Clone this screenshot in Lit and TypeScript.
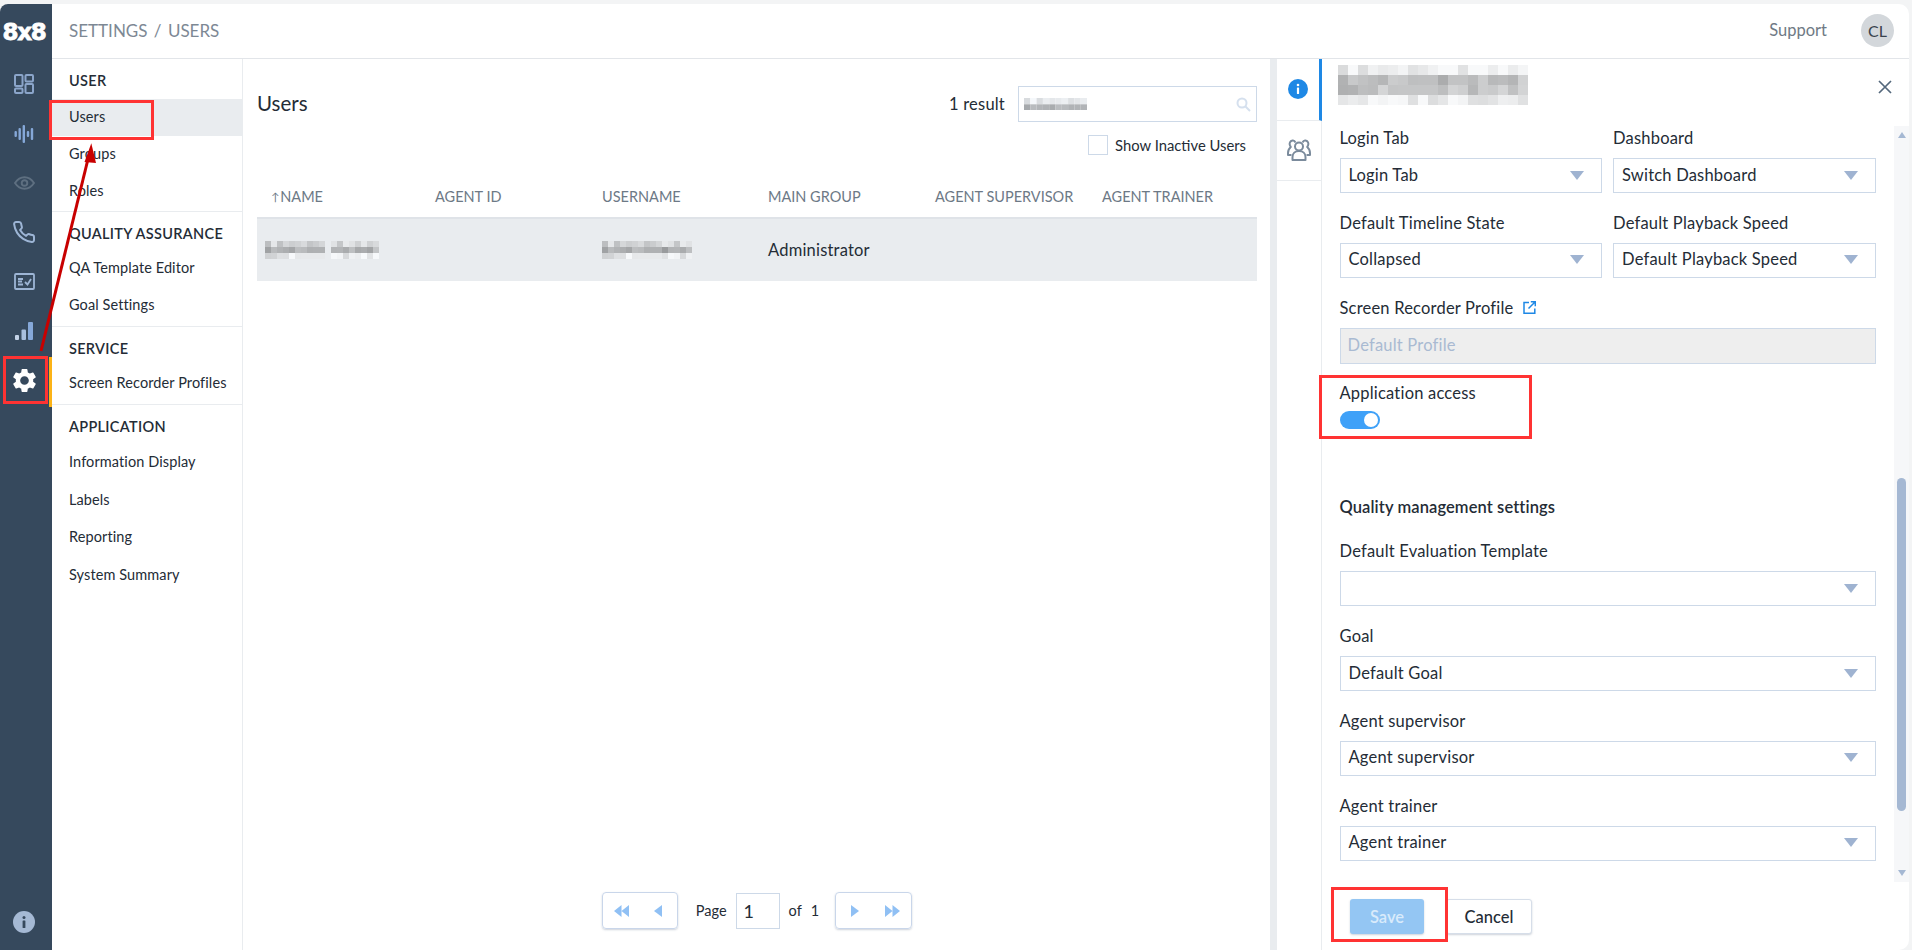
import { LitElement, html, css, svg } from "lit";
import { customElement } from "lit/decorators.js";

const mosaic = (cols: number, cell: number, tones: number[], gaps: number[] = [], tint = 0, amp = 22) => {
  const rects = [];
  for (let r = 0; r < tones.length; r++) {
    for (let c = 0; c < cols; c++) {
      if (gaps.includes(c)) continue;
      const noise = Math.sin(c * 12.9898 + r * 78.233) * 43758.5453;
      const v = tones[r] + (noise - Math.floor(noise) - 0.5) * 2 * amp;
      const shade = Math.round(Math.min(248, v));
      rects.push(svg`<rect x=${c * cell} y=${r * cell} width=${cell} height=${cell} fill="rgb(${shade},${shade + tint},${shade + tint * 2})"/>`);
    }
  }
  return html`<svg class="mosaic" width=${cols * cell} height=${tones.length * cell}>${rects}</svg>`;
};

const arrowDown = html`<span class="caret"></span>`;

const select = (label: string, value: string) => html`
  <div class="field">
    <div class="label">${label}</div>
    <div class="select"><span>${value}</span>${arrowDown}</div>
  </div>
`;

const navGroup = (title: string, items: string[], cls = "") => html`
  <div class="nav-group ${cls}">
    <div class="nav-head">${title}</div>
    ${items.map((i) => html`<div class="nav-item ${i === "Users" ? "active" : ""}">${i}</div>`)}
  </div>
`;

@customElement("app-root")
export class AppRoot extends LitElement {
  static styles = css`
    :host {
      display: block;
      position: relative;
      width: 1912px;
      height: 950px;
      overflow: hidden;
      background: #f3f4f5;
      font-family: "Lato", "Noto Sans", sans-serif;
      font-size: 15px;
      color: #242c36;
    }
    .shell {
      display: flex;
      height: 946px;
      margin: 4px 3px 0 0;
      background: #fff;
      border-radius: 8px 10px 10px 0;
      overflow: hidden;
    }

    /* icon rail */
    .rail {
      width: 52px;
      flex: none;
      box-sizing: border-box;
      padding-right: 4px;
      display: flex;
      flex-direction: column;
      background: #36495d;
    }
    .logo {
      height: 55px;
      display: flex;
      align-items: center;
      justify-content: center;
      color: #fff;
      font-family: "DejaVu Sans", sans-serif;
      font-weight: 700;
      font-size: 23px;
      letter-spacing: -1.2px;
      -webkit-text-stroke: 0.8px #fff;
    }
    .slot {
      position: relative;
      height: 49.5px;
      flex: none;
      display: flex;
      align-items: center;
      justify-content: center;
    }
    .slot.active::after {
      content: "";
      position: absolute;
      right: -4px;
      top: 1px;
      bottom: -1px;
      width: 3px;
      background: #fcb316;
    }
    .wave-icon {
      margin-top: 2px;
    }
    .rail-info {
      margin-top: auto;
      margin-bottom: 6px;
      height: 44px;
    }

    /* right of the rail */
    .content {
      flex: 1;
      min-width: 0;
      display: flex;
      flex-direction: column;
    }
    .topbar {
      height: 55px;
      flex: none;
      box-sizing: border-box;
      display: flex;
      align-items: center;
      padding: 0 15px 2px 17px;
      border-bottom: 1px solid #e2e5e9;
    }
    .crumb {
      font-size: 17px;
      color: #7d8894;
      word-spacing: 2px;
    }
    .support {
      margin-left: auto;
      font-size: 16.5px;
      color: #6f7a85;
    }
    .avatar {
      width: 33px;
      height: 33px;
      margin-left: 34px;
      border-radius: 50%;
      background: #d3d7db;
      display: flex;
      align-items: center;
      justify-content: center;
      font-size: 16px;
      color: #39424d;
    }
    .body {
      flex: 1;
      min-height: 0;
      display: flex;
    }

    /* settings nav */
    .nav {
      width: 191px;
      flex: none;
      box-sizing: border-box;
      border-right: 1px solid #e9ecef;
    }
    .nav-group {
      padding-bottom: 2px;
      border-bottom: 1px solid #e9ecef;
    }
    .nav-group.first {
      padding-bottom: 1px;
    }
    .nav-group.last {
      border-bottom: 0;
    }
    .nav-head {
      padding: 12px 0 6px 17px;
      height: 20px;
      line-height: 20px;
      font-size: 14.5px;
      font-weight: 600;
      letter-spacing: 0.3px;
    }
    .nav-group.first .nav-head {
      padding-bottom: 8px;
    }
    .nav-item {
      height: 37px;
      line-height: 36px;
      padding-left: 17px;
      font-size: 14.5px;
      letter-spacing: 0.1px;
    }
    .nav-group.last .nav-item {
      height: 37.5px;
      line-height: 37.5px;
    }
    .nav-item.active {
      background: #e9ecef;
    }

    /* users list */
    .main {
      width: 1027px;
      flex: none;
      box-sizing: border-box;
      padding: 27px 13px 21px 14px;
      display: flex;
      flex-direction: column;
    }
    .toolbar {
      display: flex;
      align-items: center;
      height: 36px;
    }
    .title {
      font-size: 20.5px;
      margin-top: -2px;
    }
    .count {
      margin-left: auto;
      font-size: 16.5px;
      letter-spacing: 0.2px;
      margin-right: 13px;
    }
    .search {
      width: 239px;
      height: 36px;
      box-sizing: border-box;
      border: 1px solid #cdd9e8;
      display: flex;
      align-items: center;
      justify-content: space-between;
      padding: 0 5px 0 5px;
    }
    .inactive {
      display: flex;
      align-items: center;
      justify-content: flex-end;
      height: 20px;
      margin-top: 13px;
      padding-right: 11px;
      font-size: 14.8px;
    }
    .check {
      width: 20px;
      height: 20px;
      box-sizing: border-box;
      border: 1px solid #cdd9e8;
      margin-right: 7px;
    }
    .thead,
    .trow {
      display: grid;
      grid-template-columns: 178px 167px 166px 167px 167px 1fr;
      align-items: center;
    }
    .thead {
      height: 64px;
      box-sizing: border-box;
      border-bottom: 2px solid #dfe3e8;
      color: #6d7986;
      font-size: 14.5px;
      padding-top: 21px;
    }
    .thead > :first-child {
      padding-left: 14px;
    }
    .sort {
      font-size: 11px;
      margin-right: 1px;
      vertical-align: 1px;
    }
    .trow {
      height: 62px;
      background: #e9ecef;
      font-size: 16.5px;
      letter-spacing: 0.2px;
    }
    .trow .blur-name {
      padding-left: 8px;
    }
    .mosaic {
      display: block;
    }
    .pager {
      margin-top: auto;
      display: flex;
      align-items: center;
      justify-content: center;
      font-size: 14.5px;
    }
    .pager-btns {
      display: flex;
      height: 37px;
      box-sizing: border-box;
      border: 1px solid #c9d6ea;
      border-radius: 4px;
      box-shadow: 0 1px 2px rgba(60, 80, 110, 0.25);
    }
    .pager-btns > div {
      width: 37px;
      display: flex;
      align-items: center;
      justify-content: center;
    }
    .pager-btns.next > div {
      width: 37.5px;
    }
    .page-word {
      margin: 0 9px 0 18px;
    }
    .page-input {
      width: 44px;
      height: 36px;
      box-sizing: border-box;
      border: 1px solid #cdd9e8;
      padding-left: 7px;
      display: flex;
      align-items: center;
      font-size: 18px;
    }
    .of {
      margin-left: 9px;
      margin-right: 9px;
    }
    .of-num {
      margin-right: 16px;
    }

    /* details panel */
    .gutter {
      width: 7px;
      flex: none;
      background: #e9ecef;
    }
    .tabs {
      width: 45px;
      flex: none;
      box-sizing: border-box;
      border-right: 1px solid #e9ecef;
    }
    .tab {
      height: 60px;
      box-sizing: border-box;
      padding-bottom: 2px;
      display: flex;
      align-items: center;
      justify-content: center;
      border-bottom: 1px solid #e9ecef;
    }
    .tab.active {
      height: 62px;
      border-right: 3px solid #1e88e5;
      margin-right: -1px;
    }
    .panel {
      flex: 1;
      min-width: 0;
      display: flex;
      flex-direction: column;
    }
    .panel-head {
      height: 67px;
      flex: none;
      display: flex;
      align-items: flex-start;
      justify-content: space-between;
      box-sizing: border-box;
      padding: 6px 17px 0 16px;
    }
    .close {
      margin-top: 15px;
    }
    .panel-body {
      height: 756px;
      flex: none;
      display: flex;
    }
    .form {
      flex: 1;
      min-width: 0;
      box-sizing: border-box;
      padding: 2px 18px 0 17.5px;
    }
    .two {
      display: grid;
      grid-template-columns: 262.5px 263px;
      column-gap: 11px;
    }
    .field {
      margin-bottom: 19.75px;
    }
    .label {
      height: 20px;
      line-height: 20px;
      margin-bottom: 10px;
      font-size: 16.5px;
      letter-spacing: 0.2px;
      display: flex;
      align-items: center;
    }
    .label svg {
      margin-left: 10px;
    }
    .select,
    .disabled {
      height: 35px;
      box-sizing: border-box;
      border: 1px solid #cdd9e8;
      display: flex;
      align-items: center;
      justify-content: space-between;
      padding: 0 17px 2px 8px;
      font-size: 16.5px;
      letter-spacing: 0.2px;
    }
    .caret {
      width: 0;
      height: 0;
      border-left: 7.5px solid transparent;
      border-right: 7.5px solid transparent;
      border-top: 9px solid #9fb3d1;
      margin-top: 1px;
    }
    .disabled {
      height: 36px;
      background: #eee;
      color: #a9bad2;
      padding-left: 7px;
    }
    .access {
      height: 114px;
    }
    .access .label {
      margin-bottom: 8px;
    }
    .toggle {
      position: relative;
      width: 40px;
      height: 18px;
      border-radius: 9px;
      background: #3fa1f8;
    }
    .toggle::after {
      content: "";
      position: absolute;
      top: 2px;
      right: 2px;
      width: 14px;
      height: 14px;
      border-radius: 50%;
      background: #fff;
    }
    .section {
      height: 20px;
      line-height: 20px;
      margin-bottom: 24px;
      font-size: 16.5px;
      font-weight: 600;
      letter-spacing: 0.1px;
    }
    .track {
      width: 15px;
      flex: none;
      background: #f6f7f9;
      display: flex;
      flex-direction: column;
      align-items: center;
      position: relative;
    }
    .thumb {
      position: absolute;
      top: 352px;
      height: 333px;
      width: 9px;
      border-radius: 5px;
      background: #a5b8d3;
    }
    .track-up,
    .track-down {
      width: 0;
      height: 0;
      border-left: 4.5px solid transparent;
      border-right: 4.5px solid transparent;
    }
    .track-up {
      margin-top: 6px;
      border-bottom: 6px solid #a5b8d3;
    }
    .track-down {
      margin-top: auto;
      margin-bottom: 6px;
      border-top: 6px solid #a5b8d3;
    }
    .panel-foot {
      display: flex;
      padding: 17px 0 0 28px;
    }
    .btn {
      height: 35px;
      box-sizing: border-box;
      display: flex;
      align-items: center;
      justify-content: center;
      border-radius: 3px;
      font-size: 16.5px;
    }
    .save {
      width: 74px;
      background: #94c6f3;
      color: #d9ebfb;
      font-weight: 600;
      box-shadow: 0 1px 2px rgba(60, 80, 110, 0.25);
    }
    .cancel {
      width: 86px;
      margin-left: 22px;
      background: #fff;
      border: 1px solid #d6dee9;
      font-weight: 500;
      box-shadow: 0 1px 2px rgba(60, 80, 110, 0.25);
    }

    /* red marks drawn over the screenshot */
    .mark {
      position: absolute;
      box-sizing: border-box;
      border: 3px solid #ff3333;
    }
    .mark-users {
      left: 49px;
      top: 100px;
      width: 105px;
      height: 40px;
    }
    .mark-gear {
      left: 3px;
      top: 356px;
      width: 45px;
      height: 48px;
    }
    .mark-access {
      left: 1319px;
      top: 375px;
      width: 213px;
      height: 64px;
    }
    .mark-save {
      left: 1331px;
      top: 887px;
      width: 117px;
      height: 55px;
    }
    .arrow {
      position: absolute;
      left: 0;
      top: 0;
    }
  `;

  render() {
    return html`
      <div class="shell">
        <aside class="rail">
          <div class="logo">8x8</div>
          <div class="slot">
            <svg width="20" height="20" viewBox="0 0 20 20" fill="none" stroke="#8ba5ca" stroke-width="2">
              <rect x="1" y="1" width="7.500" height="11" rx="1" />
              <rect x="11.500" y="1" width="7.500" height="6.500" rx="1" />
              <rect x="1" y="14.500" width="7.500" height="4.500" rx="1" />
              <rect x="11.500" y="10" width="7.500" height="9" rx="1" />
            </svg>
          </div>
          <div class="slot">
            <svg class="wave-icon" width="20" height="20" viewBox="0 0 20 20" fill="#85a8d8">
              <rect x="0.500" y="7" width="2.400" height="6" rx="1" />
              <rect x="4.500" y="4" width="2.400" height="12" rx="1" />
              <rect x="8.600" y="1" width="2.400" height="18" rx="1" />
              <rect x="12.800" y="7" width="2.400" height="6" rx="1" />
              <rect x="16.800" y="4" width="2.400" height="12" rx="1" />
            </svg>
          </div>
          <div class="slot">
            <svg width="21" height="14" viewBox="0 0 21 14" fill="none" stroke="#5e6f80" stroke-width="1.900">
              <path d="M1 7c2.500-3.800 5.800-5.800 9.500-5.800S17.500 3.200 20 7c-2.500 3.800-5.800 5.800-9.500 5.800S3.500 10.800 1 7z" />
              <circle cx="10.500" cy="7" r="2.800" />
            </svg>
          </div>
          <div class="slot">
            <svg width="24" height="24" viewBox="0 0 24 24" fill="none" stroke="#9db5d5" stroke-width="2" stroke-linecap="round" stroke-linejoin="round">
              <path d="M22 16.920v3a2 2 0 0 1-2.180 2 19.790 19.790 0 0 1-8.630-3.070 19.500 19.500 0 0 1-6-6 19.790 19.790 0 0 1-3.070-8.670A2 2 0 0 1 4.110 2h3a2 2 0 0 1 2 1.720 12.840 12.840 0 0 0 .7 2.810 2 2 0 0 1-.45 2.110L8.090 9.910a16 16 0 0 0 6 6l1.270-1.270a2 2 0 0 1 2.110-.45 12.840 12.840 0 0 0 2.810.7A2 2 0 0 1 22 16.920z" />
            </svg>
          </div>
          <div class="slot">
            <svg width="21" height="17" viewBox="0 0 21 17" fill="none" stroke="#9db5d5" stroke-width="1.800">
              <rect x="1" y="1" width="19" height="15" rx="1" />
              <path d="M4 6h5M4 8.500h4M4 11.500h5" />
              <path d="M11 9l2.500 2.500L17 6" />
            </svg>
          </div>
          <div class="slot">
            <svg width="18" height="18" viewBox="0 0 18 18">
              <rect x="0" y="13" width="4" height="5" rx="1" fill="#c3d2e6" />
              <rect x="6.500" y="7.500" width="4.500" height="10.500" rx="1" fill="#a8bfdd" />
              <rect x="13" y="0" width="5" height="18" rx="1" fill="#86a8d8" />
            </svg>
          </div>
          <div class="slot active">
            <svg width="29" height="29" viewBox="0 0 24 24" fill="#fff">
              <path d="M19.140 12.940c.04-.3.06-.61.06-.94 0-.32-.02-.64-.07-.94l2.030-1.580a.49.49 0 0 0 .12-.61l-1.920-3.320a.488.488 0 0 0-.59-.22l-2.390.96c-.5-.38-1.030-.7-1.620-.94l-.36-2.540a.484.484 0 0 0-.48-.41h-3.840c-.24 0-.43.17-.47.41l-.36 2.540c-.59.24-1.130.57-1.620.94l-2.390-.96c-.22-.08-.47 0-.59.22L2.740 8.870c-.12.21-.08.47.12.61l2.030 1.580c-.05.3-.09.63-.09.94s.02.64.07.94l-2.030 1.580a.49.49 0 0 0-.12.61l1.920 3.320c.12.22.37.29.59.22l2.390-.96c.5.38 1.030.7 1.620.94l.36 2.540c.05.24.24.41.48.41h3.840c.24 0 .44-.17.47-.41l.36-2.540c.59-.24 1.130-.56 1.620-.94l2.390.96c.22.08.47 0 .59-.22l1.920-3.320c.12-.22.07-.47-.12-.61l-2.010-1.580zM12 15.600c-1.980 0-3.600-1.620-3.600-3.600s1.620-3.600 3.600-3.600 3.600 1.620 3.600 3.600-1.620 3.600-3.600 3.600z" />
            </svg>
          </div>
          <div class="slot rail-info">
            <svg width="22" height="22" viewBox="0 0 22 22">
              <circle cx="11" cy="11" r="11" fill="#a5b9d4" />
              <circle cx="11" cy="6.500" r="1.500" fill="#36495d" />
              <rect x="9.600" y="9.500" width="2.800" height="7.500" rx="0.500" fill="#36495d" />
            </svg>
          </div>
        </aside>

        <div class="content">
          <header class="topbar">
            <span class="crumb">SETTINGS / USERS</span>
            <span class="support">Support</span>
            <span class="avatar">CL</span>
          </header>
          <div class="body">
            <nav class="nav">
              ${navGroup("USER", ["Users", "Groups", "Roles"], "first")}
              ${navGroup("QUALITY ASSURANCE", ["QA Template Editor", "Goal Settings"])}
              ${navGroup("SERVICE", ["Screen Recorder Profiles"])}
              ${navGroup("APPLICATION", ["Information Display", "Labels", "Reporting", "System Summary"], "last")}
            </nav>

            <section class="main">
              <div class="toolbar">
                <span class="title">Users</span>
                <span class="count">1 result</span>
                <div class="search">
                  ${mosaic(10, 6.300, [232, 176], [], 3, 16)}
                  <svg width="15" height="15" viewBox="0 0 15 15" fill="none" stroke="#d5e0ee" stroke-width="2">
                    <circle cx="6" cy="6" r="4.500" />
                    <path d="M9.500 9.500L14 14" />
                  </svg>
                </div>
              </div>
              <div class="inactive"><span class="check"></span>Show Inactive Users</div>
              <div class="thead">
                <span><span class="sort">↑</span>NAME</span>
                <span>AGENT ID</span>
                <span>USERNAME</span>
                <span>MAIN GROUP</span>
                <span>AGENT SUPERVISOR</span>
                <span>AGENT TRAINER</span>
              </div>
              <div class="trow">
                <span class="blur-name">${mosaic(19, 6, [210, 174, 228], [10], 2)}</span>
                <span></span>
                <span>${mosaic(15, 6, [210, 174, 228], [], 2)}</span>
                <span>Administrator</span>
                <span></span>
                <span></span>
              </div>
              <div class="pager">
                <div class="pager-btns">
                  <div>
                    <svg width="15" height="12" viewBox="0 0 15 12" fill="#90c0f4"><path d="M7.500 0v12L0 6zM15 0v12L7.500 6z" /></svg>
                  </div>
                  <div>
                    <svg width="8" height="12" viewBox="0 0 8 12" fill="#90c0f4"><path d="M8 0v12L0 6z" /></svg>
                  </div>
                </div>
                <span class="page-word">Page</span>
                <span class="page-input">1</span>
                <span class="of">of</span>
                <span class="of-num">1</span>
                <div class="pager-btns next">
                  <div>
                    <svg width="8" height="12" viewBox="0 0 8 12" fill="#90c0f4"><path d="M0 0v12l8-6z" /></svg>
                  </div>
                  <div>
                    <svg width="15" height="12" viewBox="0 0 15 12" fill="#90c0f4"><path d="M0 0v12l7.500-6zM7.500 0v12L15 6z" /></svg>
                  </div>
                </div>
              </div>
            </section>

            <div class="gutter"></div>

            <div class="tabs">
              <div class="tab active">
                <svg width="20" height="20" viewBox="0 0 20 20">
                  <circle cx="10" cy="10" r="10" fill="#1e88e5" />
                  <circle cx="10" cy="6" r="1.300" fill="#fff" />
                  <rect x="8.900" y="8.500" width="2.200" height="6.500" rx="0.400" fill="#fff" />
                </svg>
              </div>
              <div class="tab">
                <svg width="24" height="24" viewBox="0 0 24 24" fill="none" stroke="#7b8b9c" stroke-width="2" stroke-linejoin="round">
                  <circle cx="12" cy="8.500" r="4" />
                  <path d="M5.500 22v-3c0-3.500 2.500-6 6.500-6s6.500 2.500 6.500 6v3z" />
                  <path d="M8.500 4.500C7.800 3 6.500 2.300 5.500 2.500 3 3 2 5.500 3 7.500l.8 1.500C2 10.500 1 12.500 1 15v2h3.500" />
                  <path d="M15.500 4.500c.7-1.500 2-2.200 3-2 2.500.5 3.500 3 2.500 5l-.8 1.500c1.800 1.500 2.800 3.500 2.800 6v2h-3.500" />
                </svg>
              </div>
            </div>

            <div class="panel">
              <div class="panel-head">
                ${mosaic(19, 10, [238, 190, 194, 238], [], 1, 20)}
                <svg class="close" width="14" height="14" viewBox="0 0 14 14" stroke="#54687c" stroke-width="1.700">
                  <path d="M1 1l12 12M13 1L1 13" />
                </svg>
              </div>
              <div class="panel-body">
                <div class="form">
                  <div class="two">
                    ${select("Login Tab", "Login Tab")} ${select("Dashboard", "Switch Dashboard")}
                    ${select("Default Timeline State", "Collapsed")} ${select("Default Playback Speed", "Default Playback Speed")}
                  </div>
                  <div class="field">
                    <div class="label">
                      Screen Recorder Profile
                      <svg width="13" height="13" viewBox="0 0 13 13" fill="none" stroke="#1e88e5" stroke-width="1.500">
                        <path d="M6 1.500H1v10.800h10.800V7.500" />
                        <path d="M5.500 7.500L12 1M7.800 .8H12.300V5.200" />
                      </svg>
                    </div>
                    <div class="disabled">Default Profile</div>
                  </div>
                  <div class="access">
                    <div class="label">Application access</div>
                    <div class="toggle"></div>
                  </div>
                  <div class="section">Quality management settings</div>
                  ${select("Default Evaluation Template", "")}
                  ${select("Goal", "Default Goal")}
                  ${select("Agent supervisor", "Agent supervisor")}
                  ${select("Agent trainer", "Agent trainer")}
                </div>
                <div class="track">
                  <span class="track-up"></span>
                  <span class="thumb"></span>
                  <span class="track-down"></span>
                </div>
              </div>
              <div class="panel-foot">
                <div class="btn save">Save</div>
                <div class="btn cancel">Cancel</div>
              </div>
            </div>
          </div>
        </div>
      </div>

      <div class="mark mark-users"></div>
      <div class="mark mark-gear"></div>
      <div class="mark mark-access"></div>
      <div class="mark mark-save"></div>
      <svg class="arrow" width="120" height="360" viewBox="0 0 120 360">
        <path d="M41 351L89 155" stroke="#c80000" stroke-width="3" fill="none" />
        <path d="M91.300 143.300L84.500 162L96 163z" fill="#c80000" />
      </svg>
    `;
  }
}
